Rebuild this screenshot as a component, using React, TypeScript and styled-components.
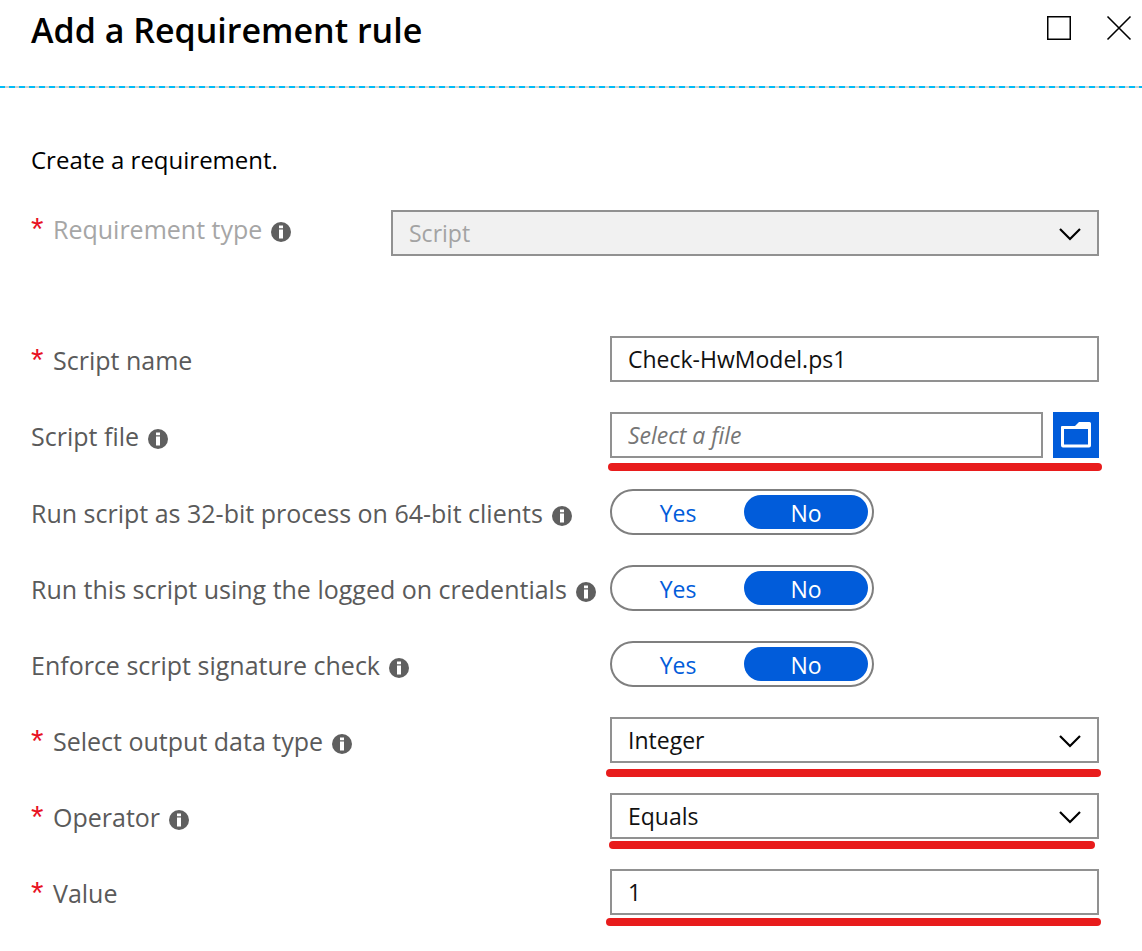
import React, { ReactNode } from "react";
import styled, { createGlobalStyle, css } from "styled-components";

const GlobalStyle = createGlobalStyle`
  *, *::before, *::after { box-sizing: border-box; }
  body {
    margin: 0;
    background: #ffffff;
    color: #000000;
    font-family: "Open Sans", "Noto Sans", sans-serif;
    font-size: 24px;
    line-height: 32px;
  }
  button, input, select { font: inherit; color: inherit; margin: 0; }
`;

const Header = styled.header`
  display: flex;
  align-items: flex-start;
  justify-content: space-between;
  height: 86px;
  padding: 6px 10px 0 31px;
`;

const Title = styled.h1`
  margin: 0;
  font-size: 34px;
  line-height: 48px;
  font-weight: 600;
`;

const WindowActions = styled.div`
  display: flex;
  gap: 34px;
  padding-top: 9px;
`;

const WindowButton = styled.button`
  display: block;
  width: 26px;
  height: 26px;
  padding: 0;
  border: 0;
  background: none;
`;

const Divider = styled.div`
  height: 2px;
  background: repeating-linear-gradient(
    90deg,
    #00bcf7 0 5px,
    #d2d0ce 5px 9px,
    #00bcf7 9px 10px
  );
`;

const Form = styled.form`
  padding: 56px 43px 24px 31px;
`;

const Intro = styled.p`
  margin: 0;
`;

const TypeSection = styled.section`
  padding: 34px 0 80px;
`;

const Section = styled.section`
  display: flex;
  flex-direction: column;
  gap: 30px;
  & + & { margin-top: 31px; }
`;

const Row = styled.div<{ $compact?: boolean }>`
  display: grid;
  grid-template-columns: ${(p) => (p.$compact ? 360 : 579)}px minmax(0, 1fr);
  align-items: start;
`;

const LabelCell = styled.div<{ $compact?: boolean; $muted?: boolean }>`
  display: flex;
  align-items: center;
  height: 32px;
  margin-top: ${(p) => (p.$compact ? 3 : 8)}px;
  color: ${(p) => (p.$muted ? "#a6a6a6" : "#5a5a5a")};
  font-size: 25px;
  white-space: nowrap;
`;

const Star = styled.span`
  width: 22px;
  color: #e81123;
  font-family: "Liberation Sans", sans-serif;
  font-size: 32px;
  line-height: 32px;
`;

const InfoIcon = styled.svg`
  flex: none;
  width: 20px;
  height: 20px;
  margin: 6px 0 0 9px;
`;

const Field = styled.div`
  position: relative;
  display: flex;
  gap: 10px;
`;

const box = css`
  flex: 1;
  min-width: 0;
  width: 100%;
  height: 46px;
  padding: 0 16px;
  border: 2px solid #919191;
  border-radius: 0;
  background: #ffffff;
  font-size: 23px;
  line-height: 32px;
  color: #111111;
  outline: 0;
`;

const TextInput = styled.input`
  ${box}
  &::placeholder { color: #767676; font-style: italic; opacity: 1; }
`;

const SelectBox = styled.select`
  ${box}
  appearance: none;
  &:disabled { background: #f1f1f1; color: #a3a3a3; opacity: 1; }
`;

const Chevron = styled.svg`
  position: absolute;
  top: 16px;
  right: 17px;
  width: 24px;
  height: 16px;
  pointer-events: none;
`;

const BrowseButton = styled.button`
  flex: none;
  display: block;
  width: 46px;
  height: 46px;
  padding: 0;
  border: 0;
  background: #015cda;
`;

const Marker = styled.span<{ $top: number; $left: number; $right: number }>`
  position: absolute;
  top: ${(p) => p.$top}px;
  left: ${(p) => p.$left}px;
  right: ${(p) => p.$right}px;
  height: 8px;
  border-radius: 4px;
  background: #e81c1c;
  pointer-events: none;
`;

const ToggleFrame = styled.div`
  display: grid;
  grid-template-columns: 1fr 1fr;
  gap: 4px;
  width: 264px;
  height: 46px;
  padding: 4px;
  border: 2px solid #7f7f7f;
  border-radius: 23px;
`;

const ToggleOption = styled.label`
  position: relative;
  display: flex;
  justify-content: center;
  height: 34px;
  padding-top: 2px;
  border-radius: 17px;
  font-size: 23px;
  line-height: 32px;
  color: #015cda;
  &:has(input:checked) { background: #015cda; color: #ffffff; }
`;

const ToggleInput = styled.input`
  position: absolute;
  inset: 0;
  width: 100%;
  height: 100%;
  opacity: 0;
`;

function Info() {
  return (
    <InfoIcon viewBox="0 0 20 20" aria-hidden="true">
      <circle cx="10" cy="10" r="10" fill="#5f5f5f" />
      <path d="M8 3.4h4v2.8H8zM8 7.6h4v9H8z" fill="#ffffff" />
    </InfoIcon>
  );
}

type LabelProps = {
  id: string;
  text: string;
  required?: boolean;
  info?: boolean;
  compact?: boolean;
  muted?: boolean;
  group?: boolean;
};

function Label({ id, text, required, info, compact, muted, group }: LabelProps) {
  return (
    <LabelCell $compact={compact} $muted={muted}>
      {required && <Star aria-hidden="true">*</Star>}
      {group ? <span id={id}>{text}</span> : <label htmlFor={id}>{text}</label>}
      {info && <Info />}
    </LabelCell>
  );
}

function Select({ id, value, disabled, children }: { id: string; value: string; disabled?: boolean; children?: ReactNode }) {
  return (
    <Field>
      <SelectBox id={id} defaultValue={value} disabled={disabled}>
        <option>{value}</option>
      </SelectBox>
      <Chevron viewBox="0 0 24 16" aria-hidden="true">
        <path d="M2 3 12 13 22 3" fill="none" stroke="#000000" strokeWidth="2.2" />
      </Chevron>
      {children}
    </Field>
  );
}

function ToggleRow({ id, text }: { id: string; text: string }) {
  return (
    <Row>
      <Label id={id} text={text} info group />
      <ToggleFrame role="radiogroup" aria-labelledby={id}>
        <ToggleOption>
          <ToggleInput type="radio" name={id} value="yes" />
          Yes
        </ToggleOption>
        <ToggleOption>
          <ToggleInput type="radio" name={id} value="no" defaultChecked />
          No
        </ToggleOption>
      </ToggleFrame>
    </Row>
  );
}

export default function App() {
  return (
    <>
      <GlobalStyle />
      <Header>
        <Title>Add a Requirement rule</Title>
        <WindowActions>
          <WindowButton type="button" aria-label="Maximize">
            <svg width="26" height="26" viewBox="0 0 26 26">
              <rect x="1.75" y="1.75" width="22.5" height="22.5" fill="none" stroke="#000000" strokeWidth="1.5" />
            </svg>
          </WindowButton>
          <WindowButton type="button" aria-label="Close">
            <svg width="26" height="26" viewBox="0 0 26 26">
              <path d="M1.5 1.5 24.5 24.5M24.5 1.5 1.5 24.5" fill="none" stroke="#000000" strokeWidth="1.6" />
            </svg>
          </WindowButton>
        </WindowActions>
      </Header>
      <Divider />
      <Form>
        <Intro>Create a requirement.</Intro>
        <TypeSection>
          <Row $compact>
            <Label id="requirement-type" text="Requirement type" required info compact muted />
            <Select id="requirement-type" value="Script" disabled />
          </Row>
        </TypeSection>
        <Section>
          <Row>
            <Label id="script-name" text="Script name" required />
            <Field>
              <TextInput id="script-name" type="text" defaultValue="Check-HwModel.ps1" spellCheck={false} />
            </Field>
          </Row>
          <Row>
            <Label id="script-file" text="Script file" info />
            <Field>
              <TextInput id="script-file" type="text" placeholder="Select a file" readOnly />
              <BrowseButton type="button" aria-label="Browse for a file">
                <svg width="46" height="46" viewBox="0 0 46 46">
                  <path
                    d="M9 14h13l4-4h10.500q1.500 0 1.500 1.500v22q0 2-2 2H10q-2 0-2-2V15q0-1 1-1ZM11 17v15.500h24V17Z"
                    fill="#ffffff"
                    fillRule="evenodd"
                  />
                </svg>
              </BrowseButton>
              <Marker $top={51} $left={-2} $right={-3} />
            </Field>
          </Row>
        </Section>
        <Section>
          <ToggleRow id="run-32-bit" text="Run script as 32-bit process on 64-bit clients" />
          <ToggleRow id="logged-on" text="Run this script using the logged on credentials" />
          <ToggleRow id="signature-check" text="Enforce script signature check" />
          <Row>
            <Label id="output-type" text="Select output data type" required info />
            <Select id="output-type" value="Integer">
              <Marker $top={52} $left={-4} $right={-2} />
            </Select>
          </Row>
          <Row>
            <Label id="operator" text="Operator" required info />
            <Select id="operator" value="Equals">
              <Marker $top={48} $left={-1} $right={4} />
            </Select>
          </Row>
          <Row>
            <Label id="value" text="Value" required />
            <Field>
              <TextInput id="value" type="text" defaultValue="1" />
              <Marker $top={49} $left={-4} $right={-2} />
            </Field>
          </Row>
        </Section>
      </Form>
    </>
  );
}
